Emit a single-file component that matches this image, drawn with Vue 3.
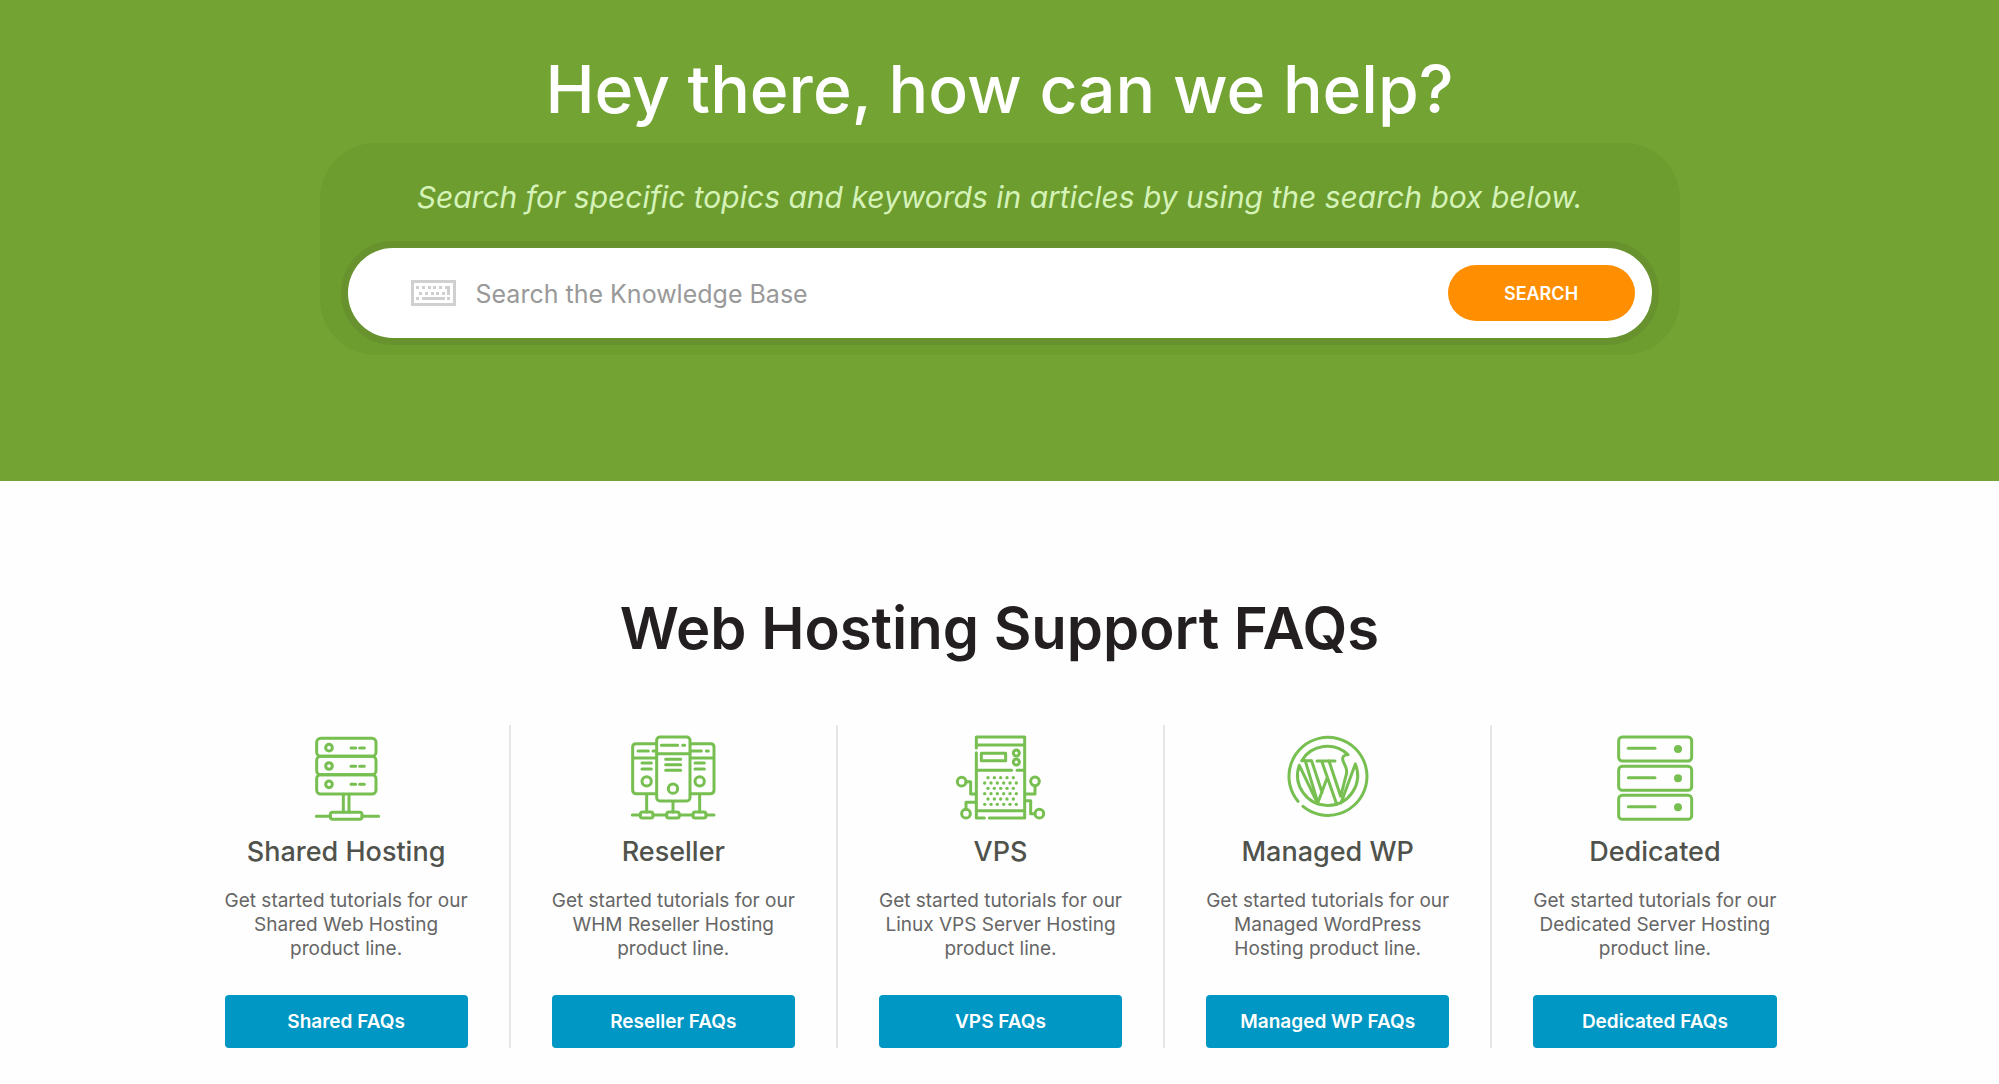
<template>
  <div class="page">
    <header class="hero">
      <h1 class="hero-title">Hey there, how can we help?</h1>

      <form class="search-panel" role="search" @submit.prevent>
        <label for="kb-search" class="search-hint">
          Search for specific topics and keywords in articles by using the search box below.
        </label>
        <div class="search-box">
          <svg class="keyboard-icon" viewBox="0 0 45 26" aria-hidden="true">
            <rect x="1.5" y="1.5" width="42" height="23" fill="none" stroke="#d0d0d0" stroke-width="3" />
            <g fill="#cfcfcf">
              <path d="M5 6h3v3h-3zM11 6h3v3h-3zM17 6h3v3h-3zM22 6h3v3h-3zM28 6h3v3h-3zM34 6h5v9h-3v-6h-2z" />
              <path d="M8 12h3v3h-3zM14 12h3v3h-3zM20 12h3v3h-3zM25 12h3v3h-3zM31 12h3v3h-3z" />
              <path d="M5 17h3v3h-3zM11 17h23v3h-23zM36 17h3v3h-3z" />
            </g>
          </svg>
          <input
            id="kb-search"
            v-model="query"
            type="text"
            class="search-input"
            placeholder="Search the Knowledge Base"
          />
          <button type="submit" class="search-btn">SEARCH</button>
        </div>
      </form>
    </header>

    <main class="faqs">
      <h2 class="faqs-title">Web Hosting Support FAQs</h2>

      <div class="faq-grid">
        <section v-for="item in items" :key="item.id" class="faq-card">
          <!-- Server rack on a stand -->
          <svg v-if="item.id === 'shared'" class="faq-icon" viewBox="33 42 270 270" aria-hidden="true">
            <rect x="80" y="58" width="178" height="54" rx="12" />
            <rect x="80" y="112" width="178" height="55" rx="12" />
            <rect x="80" y="167" width="178" height="58" rx="12" />
            <circle cx="117" cy="86" r="10" />
            <circle cx="117" cy="141" r="10" />
            <circle cx="117" cy="196" r="10" />
            <path d="M183 87h14M209 87h14M183 142h14M209 142h14M183 196h14M209 196h14" />
            <path d="M160 226v53M177 226v53M79 292h42M216 292h50" />
            <rect x="121" y="280" width="95" height="21" rx="7" />
          </svg>

          <!-- Three networked towers -->
          <svg v-else-if="item.id === 'reseller'" class="faq-icon" viewBox="26 42 270 270" aria-hidden="true">
            <rect x="112" y="54" width="100" height="192" rx="10" />
            <path d="M112 104h100M126 79h49M190 79h6M139 121h45M139 137h45M139 154h45" />
            <circle cx="161" cy="209" r="14" />
            <path d="M108 74H50q-10 0-10 10v130q0 10 10 10h58M40 117h68M56 96h31M101 96h5M68 132h28M68 150h28" />
            <circle cx="82" cy="187" r="14" />
            <path d="M216 74h58q10 0 10 10v130q0 10-10 10h-58M216 117h68M216 96h30M261 96h6M227 132h28M227 150h28" />
            <circle cx="241" cy="187" r="14" />
            <path d="M82 226v53M161 248v31M241 226v53M39 288h24M101 288h41M180 288h41M260 288h24" />
            <rect x="63" y="279" width="38" height="18" rx="7" />
            <rect x="142" y="279" width="38" height="18" rx="7" />
            <rect x="221" y="279" width="39" height="18" rx="7" />
          </svg>

          <!-- Tower with connected nodes -->
          <svg v-else-if="item.id === 'vps'" class="faq-icon" viewBox="33 42 270 270" aria-hidden="true">
            <path d="M97 87V54h145v243H136M97 101v196h24M97 78h145M97 154h106M219 154h23M97 275h145" />
            <rect x="112" y="103" width="73" height="22" />
            <circle cx="217" cy="102" r="9" />
            <circle cx="217" cy="129" r="9" />
            <circle cx="53" cy="188" r="13" />
            <circle cx="66" cy="284" r="13" />
            <circle cx="273" cy="187" r="13" />
            <circle cx="286" cy="284" r="13" />
            <path d="M66 188h14v37h15M66 271v-21h29M273 201v24h-29M244 245h16v39h13" />
            <g class="solid">
              <circle v-for="dot in dots" :key="dot.key" :cx="dot.x" :cy="dot.y" r="5" />
            </g>
          </svg>

          <!-- WordPress mark -->
          <svg v-else-if="item.id === 'wp'" class="faq-icon" viewBox="26 42 270 270" aria-hidden="true">
            <path d="M86 262A117 117 0 1 0 71 247" />
            <path d="M112 125H82A90 90 0 0 1 221 107C207 106 202 116 207 128L215 146Q219 158 215 170L199 232L164 126" />
            <path d="M93 126L130 250M112 126L143 220M128 126H182M142 126L187 256M131 250L158 178" />
            <path d="M75 139A90 90 0 1 0 243 135L200 252M75 139L130 254" />
          </svg>

          <!-- Stack of three servers -->
          <svg v-else class="faq-icon" viewBox="30 42 270 270" aria-hidden="true">
            <g v-for="y in [54, 142, 229]" :key="y">
              <rect x="56" :y="y" width="219" height="72" rx="11" />
              <path :d="`M85 ${y + 34}h80`" />
              <circle class="solid" cx="234" :cy="y + 36" r="12" />
            </g>
          </svg>

          <h3 class="faq-name">{{ item.name }}</h3>
          <p class="faq-text">
            Get started tutorials for our<br />{{ item.lines[0] }}<br />{{ item.lines[1] }}
          </p>
          <a href="#" class="faq-btn">{{ item.button }}</a>
        </section>
      </div>
    </main>
  </div>
</template>

<script setup>
import { ref } from 'vue'

const query = ref('')

const items = [
  { id: 'shared', name: 'Shared Hosting', lines: ['Shared Web Hosting', 'product line.'], button: 'Shared FAQs' },
  { id: 'reseller', name: 'Reseller', lines: ['WHM Reseller Hosting', 'product line.'], button: 'Reseller FAQs' },
  { id: 'vps', name: 'VPS', lines: ['Linux VPS Server Hosting', 'product line.'], button: 'VPS FAQs' },
  { id: 'wp', name: 'Managed WP', lines: ['Managed WordPress', 'Hosting product line.'], button: 'Managed WP FAQs' },
  { id: 'dedicated', name: 'Dedicated', lines: ['Dedicated Server Hosting', 'product line.'], button: 'Dedicated FAQs' },
]

// Ventilation holes of the VPS tower: rows of 5 and 6, staggered
const dots = []
for (let row = 0; row < 6; row++) {
  const count = row % 2 ? 6 : 5
  for (let col = 0; col < count; col++) {
    dots.push({ key: `${row}-${col}`, x: (row % 2 ? 122 : 132) + col * 19, y: 176 + row * 16 })
  }
}
</script>

<style>
body {
  background: #fefefe;
}
</style>

<style scoped>
.page {
  font-family: Inter, 'Liberation Sans', sans-serif;
  color: #666;
}

.hero {
  padding: 51px 24px 126px;
  background: #73a333;
}

.hero-title {
  margin: 0;
  font-size: 66px;
  line-height: 76px;
  font-weight: 500;
  text-align: center;
  color: #fff;
}

.search-panel {
  box-sizing: border-box;
  max-width: 1360px;
  margin: 16px auto 0;
  padding: 36px 28px 17px;
  border-radius: 56px;
  background: #6d9c2f;
}

.search-hint {
  display: block;
  margin-bottom: 33px;
  font-size: 30px;
  line-height: 36px;
  font-style: italic;
  text-align: center;
  color: #d5f3b8;
}

.search-box {
  box-sizing: border-box;
  display: flex;
  align-items: center;
  height: 90px;
  padding: 0 17px 0 63px;
  border-radius: 45px;
  background: #fff;
  box-shadow: 0 0 0 7px #67922e;
}

.keyboard-icon {
  width: 45px;
  height: 26px;
  flex-shrink: 0;
}

.search-input {
  flex: 1;
  min-width: 0;
  margin: 0 20px;
  padding: 2px 0 0;
  border: none;
  outline: none;
  background: transparent;
  font-family: inherit;
  font-size: 25px;
  line-height: 32px;
  color: #666;
}

.search-input::placeholder {
  color: #999;
  opacity: 1;
}

.search-btn {
  width: 187px;
  height: 56px;
  padding: 0;
  border: none;
  border-radius: 28px;
  background: #ff8f00;
  font-family: inherit;
  font-size: 18px;
  font-weight: 600;
  color: #fff;
  cursor: pointer;
}

.faqs {
  padding: 113px 24px 35px;
}

.faqs-title {
  margin: 0;
  font-size: 58px;
  line-height: 68px;
  font-weight: 600;
  text-align: center;
  color: #231f20;
}

.faq-grid {
  display: grid;
  grid-template-columns: repeat(5, 1fr);
  max-width: 1636px;
  margin: 63px auto 0;
}

.faq-card {
  display: flex;
  flex-direction: column;
  align-items: center;
  padding: 8px 41px 0;
  border-left: 2px solid #e6e6e6;
  text-align: center;
}

.faq-card:first-child {
  border-left-color: transparent;
}

.faq-icon {
  width: 90px;
  height: 90px;
  fill: none;
  stroke: #76bf50;
  stroke-width: 9;
  stroke-linecap: round;
  stroke-linejoin: round;
}

.solid {
  fill: #76bf50;
  stroke: none;
}

.faq-name {
  margin: 13px 0 0;
  font-size: 27px;
  line-height: 32px;
  font-weight: 500;
  color: #50524c;
}

.faq-text {
  margin: 21px 0 34px;
  font-size: 19px;
  line-height: 24px;
  white-space: nowrap;
}

.faq-btn {
  align-self: stretch;
  border-radius: 4px;
  background: #0097c4;
  font-size: 19px;
  line-height: 53px;
  font-weight: 600;
  color: #fff;
  text-decoration: none;
}
</style>
